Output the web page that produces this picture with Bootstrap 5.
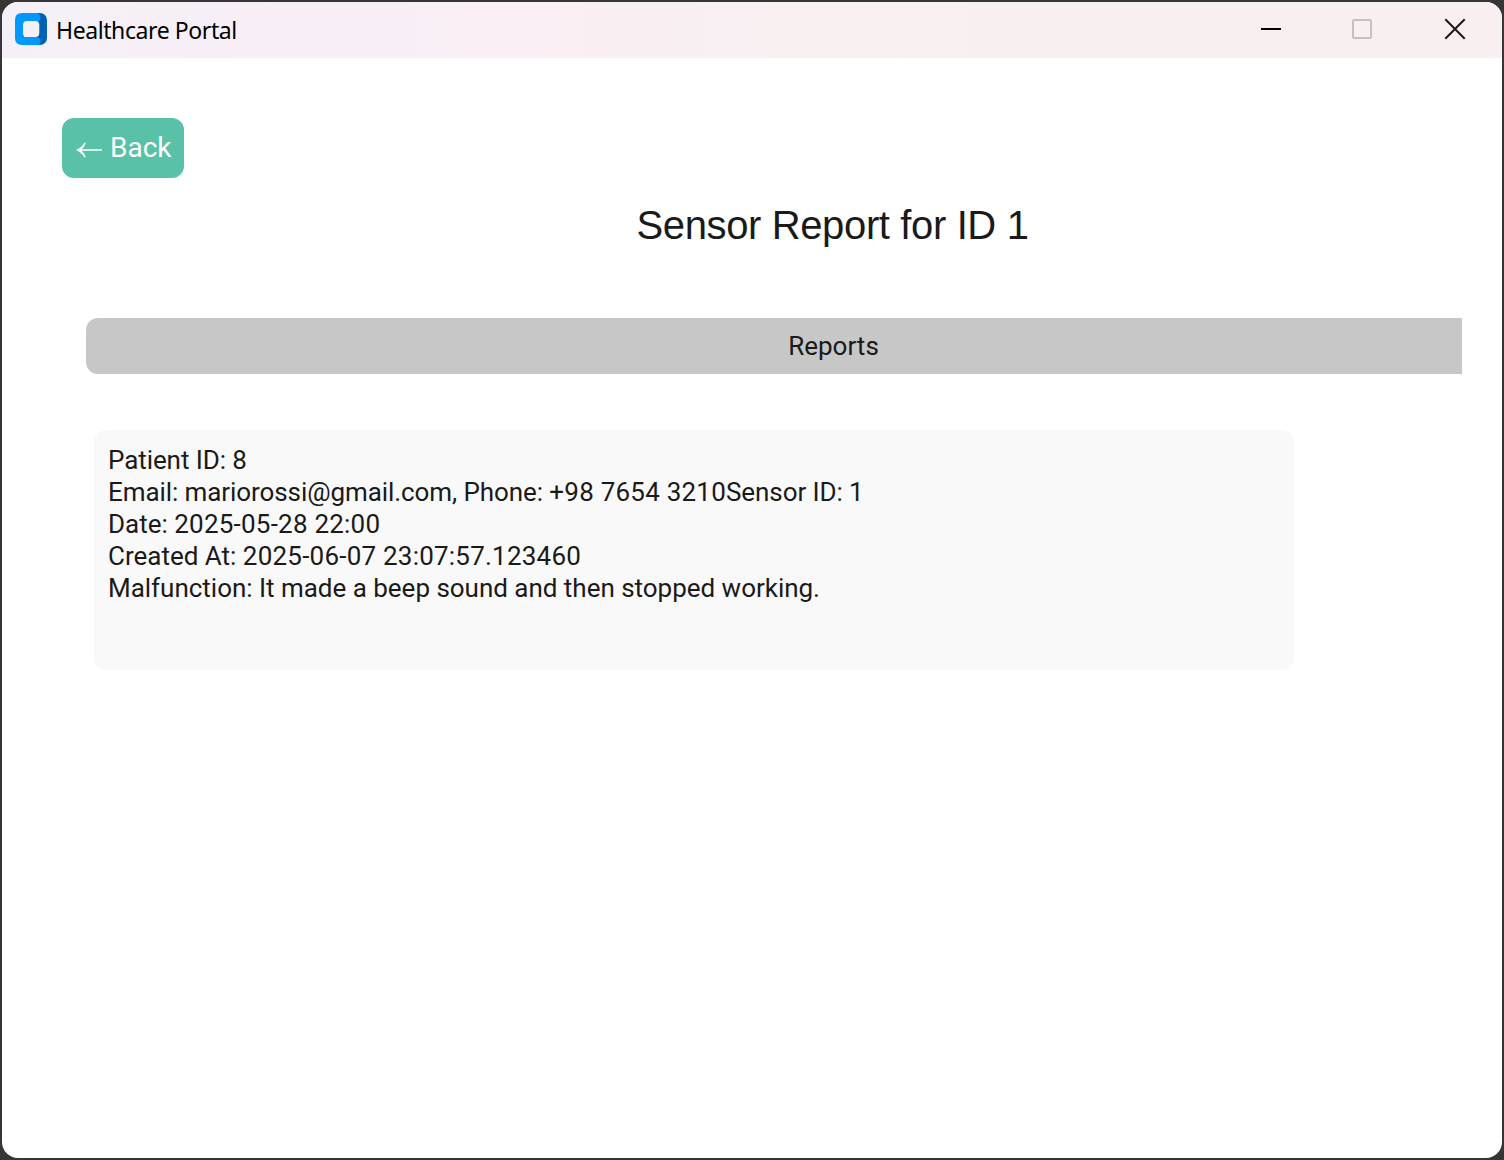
<!DOCTYPE html>
<html lang="en">
<head>
<meta charset="utf-8">
<meta name="viewport" content="width=device-width, initial-scale=1">
<title>Healthcare Portal</title>
<link href="https://cdn.jsdelivr.net/npm/bootstrap@5.3.0/dist/css/bootstrap.min.css" rel="stylesheet">
<style>
  body { background: #363636; font-family: Roboto, sans-serif; color: #1a1a1a; padding: 2px; }
  .app-window { height: 1156px; border-radius: 16px; overflow: hidden; }
  .title-bar { height: 56px; padding: 0 36px 2px 13px; background: linear-gradient(90deg, #f5f0f7 0, #f8eef6 350px, #f9eff3 600px, #f8f0f0 1000px); color: #000; }
  .app-name { font-family: "Noto Sans", sans-serif; font-size: 23px; line-height: 32px; margin: 2px 0 0 9px; letter-spacing: -.41px; font-weight: 400; }
  .win-controls { gap: 70px; }
  .page-body { padding: 60px 40px 0 60px; }
  .btn-back { --bs-btn-color: #fff; --bs-btn-bg: #58c1a8; --bs-btn-border-width: 0; --bs-btn-padding-x: 14px; --bs-btn-padding-y: 0; --bs-btn-border-radius: 12px; width: 122px; height: 60px; font-size: 28px; line-height: 58px; }
  .back-arrow { margin: 4px 8px 0 0; }
  .report-title { font-family: "Liberation Sans", Arial, sans-serif; font-size: 40px; line-height: 48px; font-weight: 400; letter-spacing: -.37px; margin: 23px 0 0 141px; }
  .reports-head { height: 56px; margin: 69px 0 0 24px; padding-left: 119px; background: #c7c7c7; border-radius: 12px 0 0 12px; font-size: 26px; line-height: 56px; }
  .report-card { --bs-card-border-width: 0; --bs-card-border-radius: 12px; --bs-card-bg: #f9f9f9; --bs-card-color: #1a1a1a; width: 1200px; height: 240px; margin: 56px 0 0 32px; padding: 14px; font-size: 26px; line-height: 32px; }
  .tight { letter-spacing: -.08px; }
  .slight { letter-spacing: -.02px; }
  .digits { letter-spacing: .22px; }
</style>
<script src="https://cdn.jsdelivr.net/npm/bootstrap@5.3.0/dist/js/bootstrap.bundle.min.js"></script>
</head>
<body>
<div class="app-window bg-white d-flex flex-column">
  <header class="title-bar d-flex align-items-center justify-content-between">
    <div class="d-flex align-items-center">
      <svg width="32" height="32" viewBox="0 0 32 32" aria-hidden="true">
        <rect x="12" width="20" height="32" rx="7" fill="#0061b0"/>
        <path d="M7 0H22Q25.5 1 25.5 4.5Q25.5 7.5 22 9H9V24H22Q25.5 25 25.5 28Q25.5 31 23.5 32H7Q0 32 0 25V7Q0 0 7 0Z" fill="#0099ff"/>
        <rect x="8" y="8" width="16.3" height="16" rx="4" fill="#f6f0f7"/>
      </svg>
      <h1 class="app-name">Healthcare Portal</h1>
    </div>
    <div class="win-controls d-flex align-items-center">
      <svg width="22" height="22" viewBox="0 0 22 22" aria-label="Minimize"><path d="M1 11H21" stroke="#000" stroke-width="2"/></svg>
      <svg width="22" height="22" viewBox="0 0 22 22" aria-label="Maximize"><rect x="1" y="2" width="18" height="18" rx="1.5" fill="none" stroke="#c6c0c0" stroke-width="2"/></svg>
      <svg width="22" height="22" viewBox="0 0 22 22" aria-label="Close"><path d="M1.3 1.3L20.7 20.7M20.7 1.3L1.3 20.7" stroke="#1a1a1a" stroke-width="2"/></svg>
    </div>
  </header>
  <main class="page-body flex-grow-1">
    <button type="button" class="btn btn-back d-flex align-items-center text-nowrap">
      <svg class="back-arrow flex-shrink-0" width="26" height="16" viewBox="0 0 26 16" aria-hidden="true"><path d="M0 8Q6 5 8.5 .5L9.7 1Q8.5 5 5.5 7.2H26V8.8H5.5Q8.5 11 9.7 15L8.5 15.5Q6 11 0 8Z" fill="#fff"/></svg>
      <span>Back</span>
    </button>
    <h2 class="report-title text-center">Sensor Report for ID 1</h2>
    <div class="reports-head text-center">Reports</div>
    <section class="card report-card">
      <div class="tight">Patient ID: 8</div>
      <div class="tight">Email: mariorossi@gmail.com, Phone: <span class="digits">+98 7654 3210</span>Sensor ID: 1</div>
      <div>Date: <span class="digits">2025-05-28 22:00</span></div>
      <div>Created At: <span class="digits">2025-06-07 23:07:57.123460</span></div>
      <div class="slight">Malfunction: It made a beep sound and then stopped working.</div>
    </section>
  </main>
</div>
</body>
</html>
